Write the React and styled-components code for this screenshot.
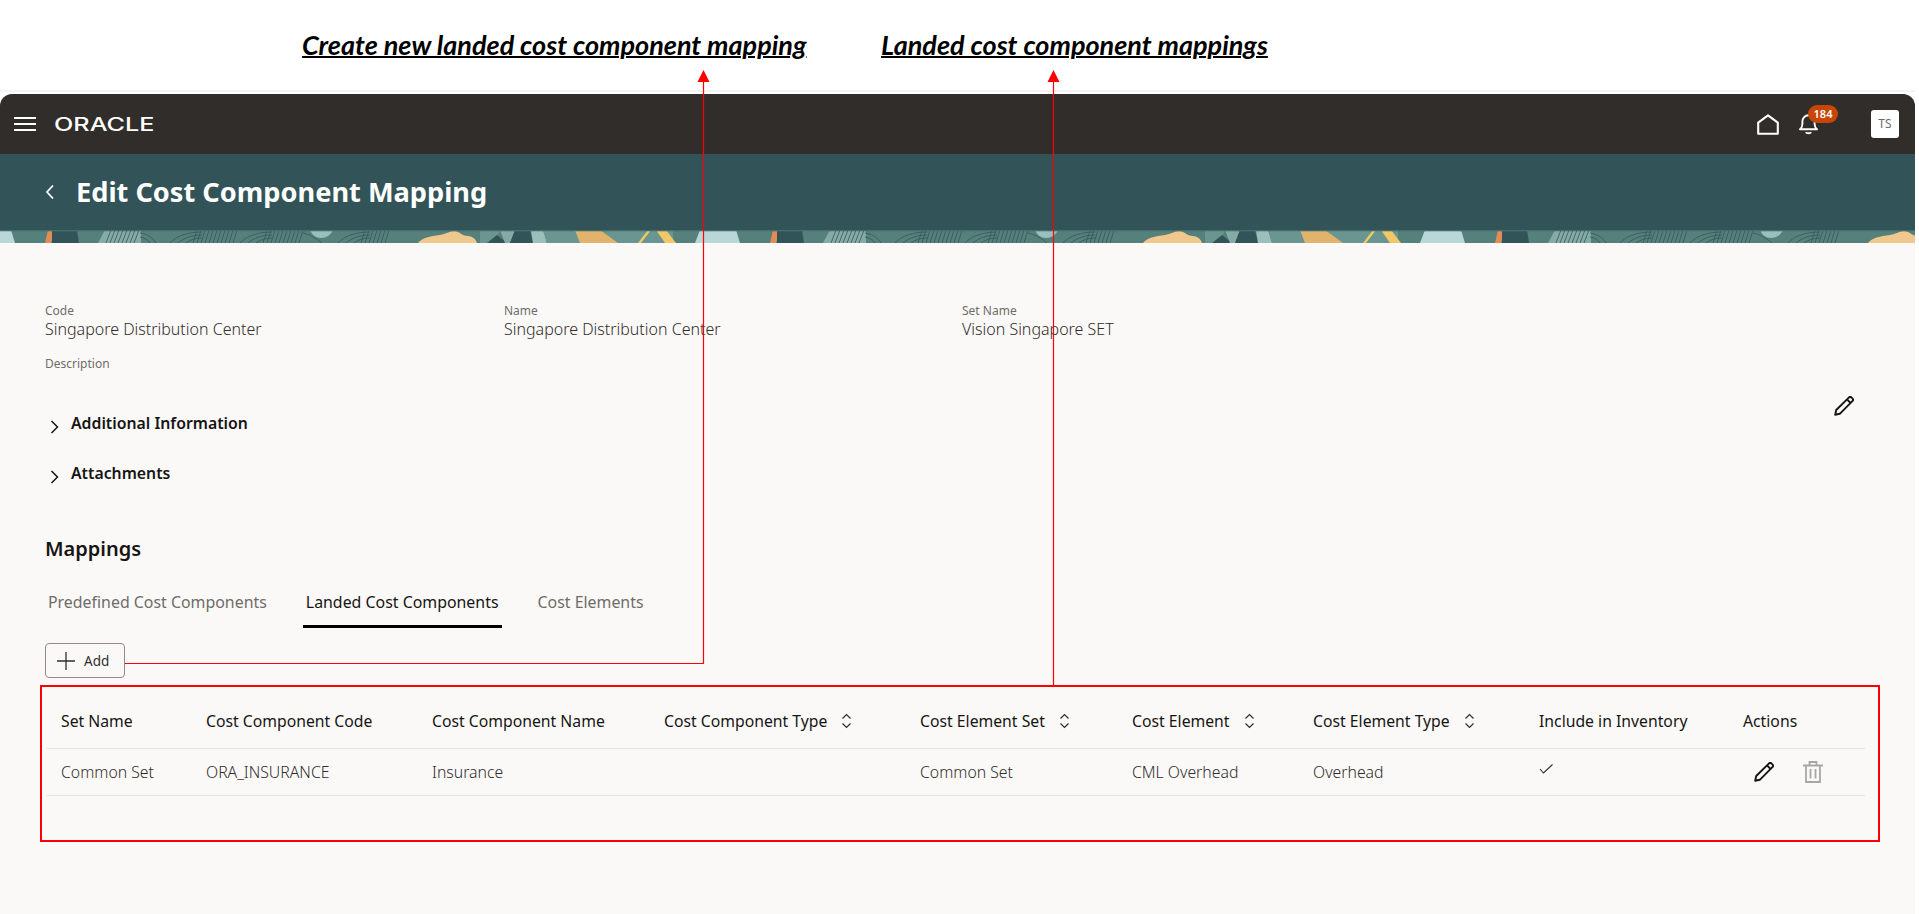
import React from "react";
import styled, { createGlobalStyle } from "styled-components";

const uiFont = `"Noto Sans", "Open Sans", sans-serif`;

const GlobalStyle = createGlobalStyle`
  html, body {
    margin: 0;
    padding: 0;
    background: #ffffff;
    font-family: ${uiFont};
    overflow: hidden;
  }
  * { box-sizing: border-box; }
`;

const columns = [
  { label: "Set Name", width: 145 },
  { label: "Cost Component Code", width: 226 },
  { label: "Cost Component Name", width: 232 },
  { label: "Cost Component Type", width: 256, sortable: true },
  { label: "Cost Element Set", width: 212, sortable: true },
  { label: "Cost Element", width: 181, sortable: true },
  { label: "Cost Element Type", width: 226, sortable: true },
  { label: "Include in Inventory", width: 204 },
  { label: "Actions", width: 0 },
];

const rowCells = ["Common Set", "ORA_INSURANCE", "Insurance", "", "Common Set", "CML Overhead", "Overhead"];

export default function App() {
  return (
    <Page>
      <GlobalStyle />
      <Captions>
        <Caption $width={579}>Create new landed cost component mapping</Caption>
        <Caption>Landed cost component mappings</Caption>
      </Captions>

      <Panel>
        <TopBar>
          <Hamburger>
            <span />
            <span />
            <span />
          </Hamburger>
          <Logo>ORACLE</Logo>
          <TopActions>
            <HomeIcon />
            <BellWrap>
              <BellIcon />
              <Badge>184</Badge>
            </BellWrap>
            <Avatar>TS</Avatar>
          </TopActions>
        </TopBar>

        <TitleBar>
          <svg width="10" height="16" viewBox="0 0 10 16" fill="none">
            <path d="M8 1.5 2 8l6 6.5" stroke="#fff" strokeWidth="1.8" />
          </svg>
          <Title>Edit Cost Component Mapping</Title>
        </TitleBar>
        <Pattern />

        <Content>
          <FieldGrid>
            <Field>
              <FieldLabel>Code</FieldLabel>
              <FieldValue>Singapore Distribution Center</FieldValue>
            </Field>
            <Field>
              <FieldLabel>Name</FieldLabel>
              <FieldValue>Singapore Distribution Center</FieldValue>
            </Field>
            <Field>
              <FieldLabel>Set Name</FieldLabel>
              <FieldValue>Vision Singapore SET</FieldValue>
            </Field>
            <Field>
              <FieldLabel>Description</FieldLabel>
            </Field>
          </FieldGrid>

          <Disclosures>
            <Disclosure>
              <Chevron />
              <DisclosureLabel>Additional Information</DisclosureLabel>
              <EditSlot>
                <PencilIcon size={20} />
              </EditSlot>
            </Disclosure>
            <Disclosure>
              <Chevron />
              <DisclosureLabel>Attachments</DisclosureLabel>
            </Disclosure>
          </Disclosures>

          <SectionTitle>Mappings</SectionTitle>
          <Tabs>
            <Tab>Predefined Cost Components</Tab>
            <Tab $active>Landed Cost Components</Tab>
            <Tab>Cost Elements</Tab>
          </Tabs>

          <AddButton>
            <svg width="18" height="18" viewBox="0 0 18 18" fill="none">
              <path d="M9 0v18M0 9h18" stroke="#312d2a" strokeWidth="1.3" />
            </svg>
            Add
          </AddButton>
        </Content>

        <TableBox>
          <HeaderRow>
            {columns.map((col) => (
              <HeaderCell key={col.label} $width={col.width}>
                {col.label}
                {col.sortable && <SortIcon />}
              </HeaderCell>
            ))}
          </HeaderRow>
          <BodyRow>
            {rowCells.map((text, i) => (
              <BodyCell key={columns[i].label} $width={columns[i].width}>
                {text}
              </BodyCell>
            ))}
            <BodyCell $width={columns[7].width}>
              <CheckMark width="15" height="10" viewBox="0 0 15 10" fill="none">
                <path d="M1 5 4.500 9 13.500 .5" stroke="#312d2a" strokeWidth="1.100" />
              </CheckMark>
            </BodyCell>
            <ActionCell>
              <PencilIcon size={20} />
              <TrashIcon />
            </ActionCell>
          </BodyRow>
        </TableBox>
      </Panel>

      <Connector width="1919" height="914" viewBox="0 0 1919 914" fill="none">
        <path d="M125 663.500H703.500V80" stroke="#ff0000" strokeWidth="1.200" />
        <path d="M703.500 70 697.500 82h12z" fill="#ff0000" />
        <path d="M1053.500 686V80" stroke="#ff0000" strokeWidth="1.200" />
        <path d="M1053.500 70 1047.500 82h12z" fill="#ff0000" />
      </Connector>
    </Page>
  );
}

function HomeIcon() {
  return (
    <svg width="22" height="21" viewBox="0 0 22 21" fill="none">
      <path d="M1.200 8.600 11 1.300l9.800 7.300v11.200H1.200z" stroke="#fff" strokeWidth="2.100" strokeLinejoin="round" />
    </svg>
  );
}

function BellIcon() {
  return (
    <svg width="21" height="22" viewBox="0 0 21 22" fill="none">
      <path
        d="M2 16.300c1.500-1.300 2.400-2.600 2.400-5.300V8.500C4.400 5 7 2.200 10.500 2.200s6.100 2.800 6.100 6.300V11c0 2.700.9 4 2.400 5.300z"
        stroke="#fff"
        strokeWidth="1.900"
        strokeLinejoin="round"
      />
      <path d="M7.800 19.200c.8 1.300 4.600 1.300 5.400 0" stroke="#fff" strokeWidth="1.900" />
    </svg>
  );
}

function Chevron() {
  return (
    <ChevronBox width="9" height="14" viewBox="0 0 9 14" fill="none">
      <path d="M1.500 1 7.500 7l-6 6" stroke="#161513" strokeWidth="1.500" />
    </ChevronBox>
  );
}

function SortIcon() {
  return (
    <SortBox width="11" height="16" viewBox="0 0 11 16" fill="none">
      <path d="M1.500 5.500 5.500 1.500l4 4M1.500 10.500l4 4 4-4" stroke="#312d2a" strokeWidth="1.200" />
    </SortBox>
  );
}

function PencilIcon({ size }) {
  return (
    <svg width={size} height={size} viewBox="0 0 20 20" fill="none">
      <path
        d="M1.200 18.800 2.200 14 14.800 1.600c.8-.8 2-.8 2.800 0l.8.8c.8.8.8 2 0 2.800L5.800 17.800z"
        stroke="#161513"
        strokeWidth="1.900"
        strokeLinejoin="round"
      />
      <path d="M13 3.400 16.600 7" stroke="#161513" strokeWidth="1.900" />
    </svg>
  );
}

function TrashIcon() {
  return (
    <svg width="20" height="22" viewBox="0 0 20 22" fill="none">
      <path
        d="M0 4.500h20M6.500 4.500V1h7v3.500M3 4.500V21h14V4.500M7.500 8v9.500M12.500 8v9.500"
        stroke="#a9a7a5"
        strokeWidth="1.800"
      />
    </svg>
  );
}

// banner artwork, repeats every 725px along the strip
function Pattern() {
  return (
    <PatternSvg width="1915" height="13" viewBox="0 0 1915 13" preserveAspectRatio="none">
      <defs>
        <pattern id="strip" width="725" height="13" patternUnits="userSpaceOnUse">
          <rect width="725" height="13" fill="#55807b" />
          <path d="M0 0h11l4 13H0z" fill="#b9d6d8" />
          <path d="M48 0h7l-4 13h-6z" fill="#e58b55" />
          <path d="M52 0h25l2 13H52z" fill="#325458" />
          <path d="M98 13l7-13h36v13z" fill="#86aba7" />
          <g stroke="#33565a" strokeWidth="0.800" fill="none">
            <path d="M106 13l5-13M110 13l5-13M114 13l5-13M118 13l5-13M122 13l5-13M126 13l5-13M130 13l5-13M134 13l5-13" />
            <path d="M140 3c8 1 13 5 16 10M140 7c5 1 8 3 10 6" />
            <path d="M170 13c6-7 18-11 32-11M178 13c6-5 14-8 24-8M186 13c4-3 9-5 16-5" />
            <path d="M197 0l-4 13M201 0l-4 13M205 0l-4 13M209 0l-4 13M213 0l-4 13M217 0l-4 13M221 0l-4 13M225 0l-4 13M229 0l-4 13M233 0l-4 13M237 0l-4 13" />
            <path d="M240 13c6-7 18-11 32-11M248 13c6-5 14-8 24-8M256 13c4-3 9-5 16-5" />
            <path d="M267 0l-4 13M271 0l-4 13M275 0l-4 13M279 0l-4 13M283 0l-4 13M287 0l-4 13M291 0l-4 13M295 0l-4 13M299 0l-4 13M303 0l-4 13" />
            <path d="M303 3c6 1 13 5 19 10" />
            <path d="M338 13c6-7 18-11 32-11M346 13c6-5 14-8 24-8M354 13c4-3 9-5 16-5" />
            <path d="M365 0l-4 13M369 0l-4 13M373 0l-4 13M377 0l-4 13M381 0l-4 13M385 0l-4 13M389 0l-4 13" />
          </g>
          <path d="M310 0h23c-2 5-7 8-12 8s-9-3-11-8z" fill="#9bbfbc" />
          <path d="M418 13c4-5 12-7 22-8 6-1 10-4 14-4 5 0 8 5 14 5 4 0 8 3 9 7z" fill="#f0c88d" />
          <path d="M480 0h20l-6 13h-14z" fill="#6b9590" />
          <path d="M487 13l10-8 10 8z" fill="#325458" />
          <path d="M500 0h15l-5 13h-5z" fill="#86aba7" />
          <path d="M515 0h15l3 13h-23z" fill="#325458" />
          <path d="M531 0h12l4 13h-14z" fill="#9dbfbc" />
          <path d="M543 0h130v13H547z" fill="#6b9590" />
          <path d="M575 0h25l18 13h-38z" fill="#e2b36c" />
          <path d="M648 0h3l-10 13h-3z" fill="#f2c866" />
          <path d="M656 0h10l10 13h-11z" fill="#f2c866" />
          <path d="M700 0h35l3 13h-43z" fill="#b9d6d8" />
          <rect width="725" height="1.300" fill="#45706e" />
        </pattern>
      </defs>
      <rect width="1915" height="13" fill="url(#strip)" />
    </PatternSvg>
  );
}

const Page = styled.div`
  position: relative;
  width: 1919px;
  height: 914px;
  display: flex;
  flex-direction: column;
  overflow: hidden;
`;

const Captions = styled.div`
  height: 92px;
  padding: 30px 0 0 302px;
  display: flex;
  border-bottom: 2px solid #f4f3f2;
  width: 1915px;
  margin-bottom: 2px;
`;

const Caption = styled.div`
  font-family: Lato, "Liberation Sans", sans-serif;
  font-size: 27px;
  line-height: 30px;
  font-weight: 700;
  font-style: italic;
  color: #000;
  text-decoration: underline;
  text-decoration-thickness: 2px;
  width: ${(p) => (p.$width ? `${p.$width}px` : "auto")};
  white-space: nowrap;
`;

const Panel = styled.main`
  flex: 1;
  width: 1915px;
  background: #fbf9f8;
  border-radius: 12px 12px 0 0;
  overflow: hidden;
`;

const TopBar = styled.header`
  height: 60px;
  background: #312d2a;
  display: flex;
  align-items: center;
  padding: 0 16px 0 14px;
`;

const Hamburger = styled.div`
  width: 22px;
  height: 14px;
  display: flex;
  flex-direction: column;
  justify-content: space-between;
  margin-right: 18px;
  span {
    display: block;
    height: 2px;
    background: #fff;
  }
`;

const Logo = styled.div`
  color: #fff;
  font-family: Inter, sans-serif;
  font-size: 18px;
  line-height: 18px;
  font-weight: 500;
  width: 100px;
  margin-top: 2px;
  white-space: nowrap;
  transform: scaleX(1.4);
  transform-origin: left center;
`;

const TopActions = styled.div`
  margin-left: auto;
  display: flex;
  align-items: center;
`;

const BellWrap = styled.div`
  position: relative;
  display: flex;
  margin: 0 52px 0 19px;
`;

const Badge = styled.span`
  position: absolute;
  left: 10px;
  top: -8px;
  width: 30px;
  height: 18px;
  border-radius: 9px;
  background: #c74606;
  color: #fff;
  font-size: 11px;
  line-height: 18px;
  font-weight: 600;
  text-align: center;
`;

const Avatar = styled.div`
  width: 28px;
  height: 28px;
  border-radius: 3px;
  background: #fff;
  color: #6f6c69;
  font-size: 12px;
  line-height: 28px;
  text-align: center;
`;

const TitleBar = styled.div`
  height: 76px;
  background: #325458;
  display: flex;
  align-items: center;
  gap: 21px;
  padding-left: 45px;
`;

const Title = styled.h1`
  margin: 0;
  color: #fff;
  font-size: 27.200px;
  line-height: 34px;
  font-weight: 700;
`;

const PatternSvg = styled.svg`
  display: block;
`;

const Content = styled.div`
  padding: 60px 0 0 45px;
`;

const FieldGrid = styled.div`
  display: grid;
  grid-template-columns: 459px 458px 1fr;
  row-gap: 14px;
`;

const Field = styled.div`
  min-height: 39px;
`;

const FieldLabel = styled.div`
  font-size: 12px;
  line-height: 16px;
  color: #6f6c69;
`;

const FieldValue = styled.div`
  font-size: 16px;
  line-height: 20px;
  color: #312d2a;
  font-weight: 300;
`;

const Disclosures = styled.div`
  margin-top: 3px;
`;

const Disclosure = styled.div`
  display: flex;
  align-items: center;
  height: 50px;
  position: relative;
  padding-left: 5px;
`;

const ChevronBox = styled.svg`
  margin: 8px 12px 0 0;
`;

const DisclosureLabel = styled.div`
  font-size: 15.800px;
  font-weight: 600;
  color: #161513;
`;

const EditSlot = styled.div`
  position: absolute;
  right: 61px;
  top: -2px;
`;

const SectionTitle = styled.h2`
  margin: 37px 0 0;
  font-size: 20px;
  line-height: 28px;
  font-weight: 600;
  color: #161513;
`;

const Tabs = styled.nav`
  display: flex;
  gap: 33px;
  margin-top: 20px;
`;

const Tab = styled.div`
  height: 45px;
  padding: 9px 3px 0;
  font-size: 15.900px;
  line-height: 20px;
  color: ${(p) => (p.$active ? "#161513" : "#6f6c69")};
  border-bottom: 3px solid ${(p) => (p.$active ? "#000" : "transparent")};
`;

const AddButton = styled.button`
  display: flex;
  align-items: center;
  gap: 9px;
  width: 80px;
  height: 35px;
  margin-top: 15px;
  padding: 0 0 0 11px;
  background: #fbf9f8;
  border: 1px solid #8f8c89;
  border-radius: 4px;
  font-family: ${uiFont};
  font-size: 13.500px;
  font-weight: 400;
  color: #312d2a;
`;

const TableBox = styled.section`
  width: 1840px;
  height: 157px;
  margin: 7px 0 0 40px;
  padding: 0 13px 0 5px;
  border: 2px solid #ff0000;
`;

const HeaderRow = styled.div`
  display: flex;
  height: 62px;
  padding: 6px 0 0 14px;
  border-bottom: 1px solid #e4e2e0;
`;

const HeaderCell = styled.div`
  width: ${(p) => (p.$width ? `${p.$width}px` : "auto")};
  display: flex;
  align-items: center;
  font-size: 15.750px;
  font-weight: 400;
  color: #161513;
  white-space: nowrap;
`;

const SortBox = styled.svg`
  margin-left: 14px;
`;

const BodyRow = styled.div`
  display: flex;
  height: 47px;
  padding-left: 14px;
  border-bottom: 1px solid #e4e2e0;
`;

const BodyCell = styled.div`
  width: ${(p) => p.$width}px;
  display: flex;
  align-items: center;
  font-size: 15.800px;
  font-weight: 300;
  color: #312d2a;
`;

const CheckMark = styled.svg`
  margin-bottom: 6px;
`;

const ActionCell = styled.div`
  display: flex;
  align-items: center;
  gap: 29px;
  padding-left: 11px;
`;

const Connector = styled.svg`
  position: absolute;
  left: 0;
  top: 0;
  pointer-events: none;
`;
